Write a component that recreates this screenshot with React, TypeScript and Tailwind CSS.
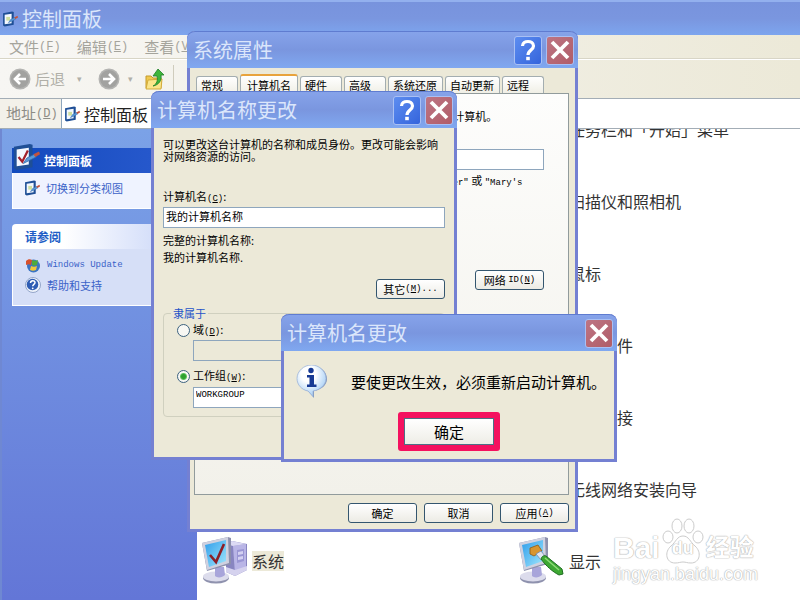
import type { ReactNode } from "react";
import clsx from "clsx";

const TABS = ["常规", "计算机名", "硬件", "高级", "系统还原", "自动更新", "远程"];

const ITEMS: { left?: string; right: string }[] = [
  { right: "任务栏和「开始」菜单" },
  { right: "扫描仪和照相机" },
  { right: "鼠标" },
  { right: "添加硬件" },
  { right: "网络连接" },
  { right: "无线网络安装向导" },
  { left: "系统", right: "显示" },
];

/* ---------- icons ---------- */

function PanelIcon({ size, check = false }: { size: number; check?: boolean }) {
  return (
    <svg width={size} height={size} viewBox="1 1 30 30" className="shrink-0">
      <path d="M3 5 20 2l3 1v24L6 30l-3-2z" fill="#1f4f96" />
      <path d="M6 8 19 6v18L6 26z" fill="#f4f8ff" />
      {check ? (
        <path d="m8 16 4 5 6-12" fill="none" stroke="#a3202c" strokeWidth="2.4" />
      ) : (
        <path d="M9 12h7v7H9z" fill="#cfe0a0" />
      )}
      <path d="m13 23 4-6 8-4 2 3-8 4z" fill="#5a9ad8" stroke="#2f66a8" strokeWidth=".8" />
      <path d="m24 13 6-3 1 3-5 3z" fill="#c4543c" />
    </svg>
  );
}

function NavIcon({ flip = false }: { flip?: boolean }) {
  return (
    <svg width="22" height="22" viewBox="0 0 22 22" className={clsx("shrink-0", flip && "-scale-x-100")}>
      <circle cx="11" cy="11" r="10.5" fill="#b4b4b2" />
      <circle cx="11" cy="11" r="9" fill="#a2a2a0" />
      <path d="M17 11H6m5-5-5 5 5 5" fill="none" stroke="#fff" strokeWidth="2.6" />
    </svg>
  );
}

function UpFolderIcon() {
  return (
    <svg width="20" height="24" viewBox="0 0 20 24" className="shrink-0">
      <path d="M1 9h5l2 2h8v10H1z" fill="#f0c94f" stroke="#c39a2c" />
      <path d="m3 13 14-1-1 10H1z" fill="#fbe58a" stroke="#d2ab3a" />
      <path d="M8 19c4-2 5-6 4-10H8l5-7 6 6h-3c1 5-2 10-8 11z" fill="#3fb53a" stroke="#1f7f28" strokeWidth=".8" />
    </svg>
  );
}

function UpdateIcon() {
  return (
    <svg width="16" height="16" viewBox="0 0 16 16" className="shrink-0">
      <circle cx="8.500" cy="9" r="6.500" fill="#3b74c4" />
      <path d="M1 4c2-2 4-2 6-1l-1 5C4 7 3 7 1 8z" fill="#d8502c" />
      <path d="M7 3c2 1 4 1 6 0l-1 5c-2 1-4 1-5 0z" fill="#4faa3c" />
      <path d="M6 9c2 1 4 1 6 0l-1 4c-2 1-4 1-6 0z" fill="#f2c838" />
    </svg>
  );
}

function SupportIcon() {
  return (
    <svg width="16" height="16" viewBox="0 0 16 16" className="shrink-0">
      <circle cx="8" cy="8" r="7.500" fill="#f0f4fb" stroke="#7f94bd" strokeWidth=".8" />
      <circle cx="7.500" cy="7.500" r="5.800" fill="#2f5db4" />
      <path d="M5.500 6c0-3 4.500-3 4.500-.4C10 7.500 7.800 7.300 7.700 9.300" fill="none" stroke="#fff" strokeWidth="1.500" />
      <circle cx="7.700" cy="11.300" r=".9" fill="#fff" />
    </svg>
  );
}

function Monitor() {
  return (
    <>
      <ellipse cx="14" cy="41" rx="13" ry="5.500" fill="#8f92ae" />
      <ellipse cx="14" cy="39.500" rx="13" ry="5" fill="#dcdcec" />
      <path d="M13 30h9l1 8c-3 3-8 3-10 1z" fill="#a8a5da" />
      <path d="M0 6 26 0l3 1v26L5 34z" fill="#8d90ad" />
      <path d="M0 6 26 0l1 26L5 33z" fill="#cfd1e0" />
      <path d="M3 8 24 3v21L7 30z" fill="url(#screen)" />
    </>
  );
}

function ScreenGradient() {
  return (
    <defs>
      <linearGradient id="screen" x1="0" y1="0" x2="1" y2="1">
        <stop offset="0" stopColor="#2f9dea" />
        <stop offset="1" stopColor="#9fe6fd" />
      </linearGradient>
    </defs>
  );
}

function SystemIcon() {
  return (
    <svg width="46" height="48" viewBox="0 0 46 48" className="shrink-0">
      <ScreenGradient />
      <path d="m24 7 6-3 15 3v26l-12 6-9-4z" fill="#8885c0" />
      <path d="m31 9 13-2v25l-11 5z" fill="#b9b5e6" />
      <path d="m24 7 6-3 14 3-13 2z" fill="#dcdaf4" />
      <path d="m35 13 7-1v12l-7 2z" fill="#9a96d4" />
      <path d="m36 15 5-1v3l-5 1zm0 5 5-1v3l-5 1z" fill="#d4d1f2" />
      <path d="m24 30 9 3 12-4v4l-12 6-9-4z" fill="#d5d2ee" />
      <Monitor />
      <path d="m8 18 6 7 8-18" fill="none" stroke="#8c1f28" strokeWidth="2.600" />
    </svg>
  );
}

function DisplayIcon() {
  return (
    <svg width="46" height="48" viewBox="0 0 46 48" className="shrink-0">
      <ScreenGradient />
      <Monitor />
      <path d="m11 11 8-3 4 6-8 5-4-2z" fill="#d8952f" stroke="#8d5a18" strokeWidth=".8" />
      <path d="m17 17 5-3 4 5-4 4z" fill="#dfe6f2" stroke="#7686a8" strokeWidth=".8" />
      <path d="M22 22c1-3 3-4 5-3l16 13 1 5-4 1C34 35 27 29 22 22z" fill="#3da832" stroke="#1f6d22" />
      <path d="m26 21 14 12" stroke="#8fdc78" strokeWidth="1.500" />
    </svg>
  );
}

function InfoIcon() {
  return (
    <svg width="32" height="33" viewBox="0 0 32 33" className="shrink-0">
      <defs>
        <radialGradient id="bubble" cx=".4" cy=".3" r=".8">
          <stop offset=".3" stopColor="#fff" />
          <stop offset="1" stopColor="#8fc2f2" />
        </radialGradient>
      </defs>
      <path d="M17 1C9 1 3 7 3 14c0 7 4 11 9 12l6 7v-7c7-1 13-6 13-12C31 7 25 1 17 1z" fill="#7c93bb" />
      <path d="M15.500 0C8 0 1 6 1 13.500 1 20 6 25 12 26l5 5.500V26c7-1 13-6 13-12.500C30 6 23 0 15.500 0z" fill="url(#bubble)" stroke="#9db4d8" strokeWidth=".8" />
      <circle cx="15" cy="5.500" r="2.700" fill="#173a94" />
      <path d="M11 10h7v9.500h2.500V22H11v-2.500h2.500v-7H11z" fill="#173a94" />
    </svg>
  );
}

/* ---------- shared pieces ---------- */

function Key({ children }: { children: string }) {
  return (
    <span className="font-['Liberation_Mono',monospace] text-[9px]">
      (<u>{children}</u>)
    </span>
  );
}

function Latin({ children }: { children: string }) {
  return <span className="font-['Liberation_Mono',monospace] text-[9px]">{children}</span>;
}

function CaptionButton({ kind }: { kind: "help" | "close" }) {
  return (
    <button
      type="button"
      aria-label={kind === "help" ? "帮助" : "关闭"}
      className={clsx(
        "flex h-[29px] w-7 items-center justify-center rounded-[3px] border border-[#a9c0f4]",
        kind === "help"
          ? "bg-linear-to-br from-[#5d8df0] to-[#3564dc]"
          : "bg-linear-to-br from-[#bd7584] to-[#b05c68]",
      )}
    >
      <svg width="20" height="22" viewBox="0 0 20 22" fill="none" stroke="#fff">
        {kind === "help" ? (
          <>
            <path d="M4.500 7c0-6 11-6 11 0 0 4-5.500 4-5.500 9" strokeWidth="3.200" />
            <path d="M8.200 19.500h3.600" strokeWidth="3.400" />
          </>
        ) : (
          <path d="m2 3 16 16M18 3 2 19" strokeWidth="3.800" />
        )}
      </svg>
    </button>
  );
}

type DialogProps = {
  title: string;
  help?: boolean;
  className: string;
  children: ReactNode;
};

function Dialog({ title, help = false, className, children }: DialogProps) {
  return (
    <section
      role="dialog"
      aria-label={title}
      className={clsx(
        "absolute flex flex-col rounded-t-lg border-[3px] border-t-0 border-[#7480d2] bg-[#ece9d8]",
        className,
      )}
    >
      <header className="-mx-[3px] flex h-[37px] shrink-0 items-center gap-1 rounded-t-lg border-t border-[#5f7cd0] bg-linear-to-b from-[#86a3ea] via-[#7a96df] to-[#80a8f0] pr-1 pl-1.5">
        <h2 className="flex-1 text-[20px] leading-6 text-[#dbe6fb]">{title}</h2>
        {help && <CaptionButton kind="help" />}
        <CaptionButton kind="close" />
      </header>
      {children}
    </section>
  );
}

function PushButton({ children }: { children: ReactNode }) {
  return (
    <button
      type="button"
      className="flex h-5 w-[69px] items-center justify-center rounded-[3px] border border-[#34566f] bg-linear-to-b from-white to-[#ecebe4] text-[11px] leading-3 whitespace-nowrap"
    >
      {children}
    </button>
  );
}

const field = "h-[21px] w-full border border-[#8ea6bd] bg-white px-0.5 pb-1 leading-3 outline-none";
const radio =
  "size-[13px] appearance-none rounded-full border border-[#3c617e] bg-[#f8f8f4] checked:bg-[radial-gradient(circle,#2fa02f_0_2px,#5cc45c_3px,#f8f8f4_4px)]";

/* ---------- base window ---------- */

function ControlPanel() {
  return (
    <div className="flex h-full flex-col">
      <header className="flex h-[35px] shrink-0 items-center gap-1 border-t-2 border-[#93b0ee] bg-linear-to-b from-[#7893dd] via-[#7a96df] to-[#7da5ee] px-0.5">
        <PanelIcon size={16} />
        <h1 className="text-[20px] leading-6 text-[#dbe6fb]">控制面板</h1>
      </header>

      <nav className="flex h-6 shrink-0 items-center gap-4 border-b border-[#d8d5c6] bg-linear-to-r from-[#f8f7f5] to-[#ece9d8] pl-[9px] text-[15px] leading-5 text-[#a5a49c]">
        {[["文件", "F"], ["编辑", "E"], ["查看", "V"]].map(([name, key]) => (
          <a key={key} href="#" className="flex items-center whitespace-nowrap">
            {name}
            <span className="font-['Liberation_Mono',monospace] text-[12px]">(<u>{key}</u>)</span>
          </a>
        ))}
      </nav>

      <div className="flex h-[39px] shrink-0 items-center border-t border-white bg-linear-to-r from-[#f7f6f3] to-[#ece9d8] pl-[9px] text-[15px] leading-5 text-[#b0afa8]">
        <button type="button" className="flex items-center gap-1">
          <NavIcon />
          后退
          <span className="ml-2 text-[9px]">▾</span>
        </button>
        <button type="button" aria-label="前进" className="ml-4 flex items-center gap-2">
          <NavIcon flip />
          <span className="text-[9px]">▾</span>
        </button>
        <button type="button" aria-label="向上" className="ml-3">
          <UpFolderIcon />
        </button>
        <span className="ml-2 h-7 w-px bg-[#cfccbd]" />
      </div>

      <div className="flex h-[31px] shrink-0 items-stretch border-y border-[#a3adb6] bg-[#f3f1ea]">
        <label htmlFor="address" className="flex w-[62px] shrink-0 items-center border-r border-[#8ea6bd] pl-1.5 text-[15px] text-[#8d8c86]">
          地址
          <span className="font-['Liberation_Mono',monospace] text-[12px]">(<u>D</u>)</span>
        </label>
        <div className="flex flex-1 items-center gap-1 bg-white pl-0.5">
          <PanelIcon size={16} />
          <input id="address" defaultValue="控制面板" className="min-w-0 flex-1 text-[16px] leading-6 text-[#222] outline-none" />
        </div>
      </div>

      <div className="flex min-h-0 flex-1">
        <aside className="flex w-[197px] shrink-0 flex-col gap-[15px] border-l-2 border-[#6f88d2] bg-linear-to-b from-[#7ba2e7] to-[#6376d7] pt-[19px] pr-3 pl-2.5 text-[11px] text-[#3a62c8]">
          <section>
            <h3 className="flex h-[25px] items-center gap-1 bg-linear-to-r from-[#124abd] to-[#2a5bcf] text-[12px] font-bold text-white">
              <span className="-mt-2"><PanelIcon size={28} check /></span>
              控制面板
            </h3>
            <div className="h-9 border border-t-0 border-white bg-[#eff3ff] pt-[7px] pl-[11px]">
              <a href="#" className="flex items-center gap-1.5 leading-4"><PanelIcon size={16} />切换到分类视图</a>
            </div>
          </section>
          <section>
            <h3 className="flex h-[25px] items-center rounded-t bg-linear-to-r from-white from-30% to-[#c6d3f7] pl-[13px] text-[12px] font-bold text-[#215dc6]">
              请参阅
            </h3>
            <div className="flex flex-col gap-1 border border-t-0 border-white bg-[#d6dff7] pt-2 pb-3 pl-3">
              <a href="#" className="flex items-center gap-1.5 leading-4"><UpdateIcon /><Latin>Windows Update</Latin></a>
              <a href="#" className="flex items-center gap-1.5 leading-4"><SupportIcon />帮助和支持</a>
            </div>
          </section>
        </aside>

        <main className="relative flex-1 overflow-hidden bg-white">
          <ul className="-mt-9 text-[16px] leading-5 text-[#333]">
            {ITEMS.map((item) => (
              <li key={item.right} className="flex h-[72px] items-center pl-[5px]">
                <div className="flex w-[317px] shrink-0 items-center gap-1">
                  {item.left && (
                    <>
                      <SystemIcon />
                      <span className="bg-[#ece9d8]">{item.left}</span>
                    </>
                  )}
                </div>
                <div className="flex items-center gap-1 whitespace-nowrap">
                  <span className="w-[46px]">{item.left && <DisplayIcon />}</span>
                  {item.right}
                </div>
              </li>
            ))}
          </ul>
          <Watermark />
        </main>
      </div>
    </div>
  );
}

function Watermark() {
  return (
    <div className="absolute right-[44px] bottom-4 w-[143px] font-['Liberation_Sans','Noto_Sans_CJK_SC',sans-serif] text-white [text-shadow:0_0_1px_#aaa,0_0_1px_#bbb,0_0_2px_#ddd]">
      <div className="flex items-end gap-0.5 font-bold">
        <span className="text-[30px] leading-8">Bai</span>
        <span className="relative flex h-[46px] w-[42px] shrink-0 items-end justify-center pb-1.5 text-[18px] leading-5">
          <svg viewBox="0 0 42 46" className="absolute inset-0" fill="#fff" stroke="#ccc">
            <ellipse cx="6" cy="19" rx="5" ry="6" />
            <ellipse cx="15" cy="8" rx="5" ry="7" />
            <ellipse cx="27" cy="8" rx="5" ry="7" />
            <ellipse cx="36" cy="19" rx="5" ry="6" />
            <path d="M21 18c-6 0-7 6-12 10-7 6-5 17 4 17 4 0 5-1 8-1s4 1 8 1c9 0 11-11 4-17-5-4-6-10-12-10z" />
          </svg>
          <span className="relative">du</span>
        </span>
        <span className="text-[24px] leading-8">经验</span>
      </div>
      <p className="text-[18px] leading-5">jingyan.baidu.com</p>
    </div>
  );
}

/* ---------- dialogs ---------- */

function SystemProperties() {
  return (
    <Dialog title="系统属性" help className="top-[31px] left-[187px] h-[501px] w-[391px] text-[11px] leading-3">
      <div className="flex min-h-0 flex-1 flex-col py-1.5 pr-1.5 pl-1">
        <div role="tablist" className="flex items-end gap-0.5 pl-0.5">
          {TABS.map((tab, i) => (
            <button
              key={tab}
              type="button"
              role="tab"
              aria-selected={i === 1}
              className={clsx(
                "rounded-t-[3px] border border-b-0 border-[#a3adb0] bg-linear-to-b from-white to-[#f0efe6] text-left whitespace-nowrap",
                i === 1 ? "h-[19px] w-[58px] border-t-2 border-t-[#e8a33d] px-1.5" : "h-[17px] pl-1",
                [0, 2, 3, 6].includes(i) && "w-[42px]",
                [4, 5].includes(i) && "w-[55px]",
              )}
            >
              {tab}
            </button>
          ))}
        </div>
        <div className="flex min-h-0 flex-1 flex-col border border-[#919b9c] bg-linear-to-b from-[#fdfdfc] to-[#f2f1ea] pt-4 pr-6 pl-[61px]">
          <p className="whitespace-nowrap"><Latin>Windows </Latin>使用以下信息在网络中标识这台计算机。</p>
          <div className="mt-6 flex items-center gap-2">
            <label htmlFor="desc" className="shrink-0">计算机描述<Key>D</Key>:</label>
            <input id="desc" className={field} />
          </div>
          <p className="mt-0.5 w-[288px] pl-[88px] leading-4">
            例如: <Latin>"Kitchen Computer"</Latin> 或 <Latin>"Mary's</Latin>
            <br />
            <Latin>Computer"</Latin>。
          </p>
          <div className="mt-[60px] flex justify-end">
            <PushButton>网络&nbsp;<Latin>ID</Latin><Key>N</Key></PushButton>
          </div>
        </div>
        <div className="mt-2 flex justify-end gap-[7px]">
          <PushButton>确定</PushButton>
          <PushButton>取消</PushButton>
          <PushButton>应用<Key>A</Key></PushButton>
        </div>
      </div>
    </Dialog>
  );
}

function NameChange() {
  return (
    <Dialog title="计算机名称更改" help className="top-[91px] left-[151px] h-[369px] w-[306px] text-[11px] leading-3">
      <div className="flex flex-col px-[9px] pt-2.5">
        <p>
          可以更改这台计算机的名称和成员身份。更改可能会影响
          <br />
          对网络资源的访问。
        </p>
        <label htmlFor="name" className="mt-7 mb-0.5">计算机名<Key>C</Key>:</label>
        <input id="name" defaultValue="我的计算机名称" className={field} />
        <p className="mt-1 leading-[17px]">
          完整的计算机名称:
          <br />
          我的计算机名称.
        </p>
        <div className="mt-[13px] flex justify-end">
          <PushButton>其它<Key>M</Key><Latin>...</Latin></PushButton>
        </div>
        <fieldset className="mt-2 h-[110px] rounded border border-[#d0d0bf] pr-3 pl-[13px]">
          <legend className="-ml-1.5 px-0.5 text-[#1f53c8]">隶属于</legend>
          <div className="mt-1 flex items-center gap-[3px]">
            <input type="radio" id="domain" name="member" className={radio} />
            <label htmlFor="domain">域<Key>D</Key>:</label>
          </div>
          <div className="mt-0.5 pl-4">
            <input aria-label="域" disabled className="h-[21px] w-full border border-[#8ea6bd]" />
          </div>
          <div className="mt-2 flex items-center gap-[3px]">
            <input type="radio" id="workgroup" name="member" defaultChecked className={radio} />
            <label htmlFor="workgroup">工作组<Key>W</Key>:</label>
          </div>
          <div className="mt-0.5 pl-4">
            <input aria-label="工作组" defaultValue="WORKGROUP" className={clsx(field, "font-['Liberation_Mono',monospace] text-[9px]")} />
          </div>
        </fieldset>
      </div>
    </Dialog>
  );
}

function RestartNotice() {
  return (
    <Dialog title="计算机名更改" className="top-[314px] left-[281px] w-[336px] text-[15px] leading-5">
      <div className="flex flex-col items-center gap-3.5 pt-3.5 pb-2">
        <div className="flex items-center gap-[23px] self-stretch pl-3">
          <InfoIcon />
          <p className="whitespace-nowrap">要使更改生效，必须重新启动计算机。</p>
        </div>
        <div className="rounded-[3px] border-[6px] border-[#f4115f]">
          <button type="button" className="h-[27px] w-[90px] border border-[#4d6f86] bg-linear-to-b from-white to-[#eeede6]">
            确定
          </button>
        </div>
      </div>
    </Dialog>
  );
}

export default function App() {
  return (
    <div className="relative h-screen overflow-hidden font-['Noto_Sans_CJK_SC',sans-serif] text-black">
      <ControlPanel />
      <SystemProperties />
      <NameChange />
      <RestartNotice />
    </div>
  );
}
